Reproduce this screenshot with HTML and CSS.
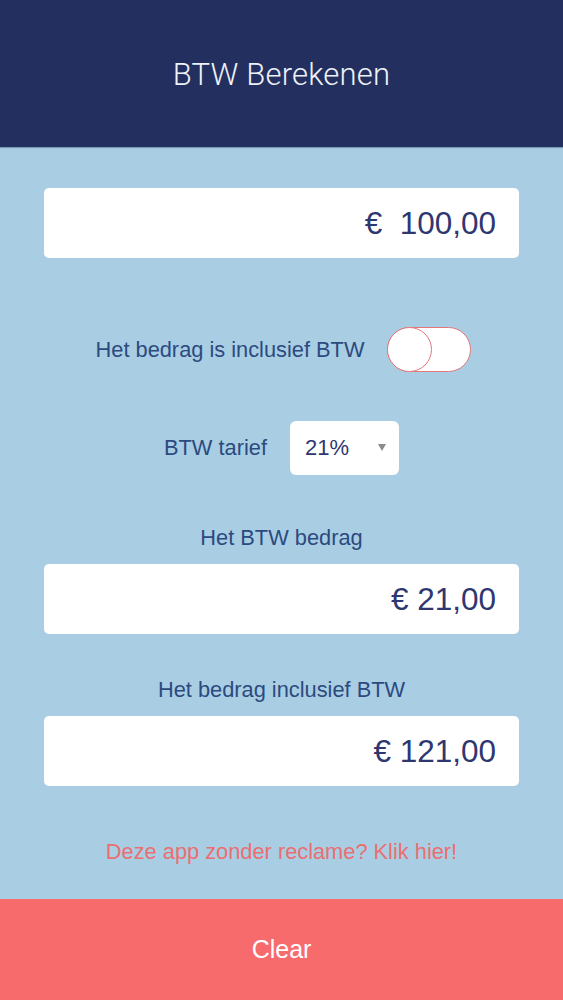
FILE: index.html
```html
<!DOCTYPE html>
<html lang="nl">
<head>
<meta charset="utf-8">
<title>BTW Berekenen</title>
<link rel="stylesheet" href="styles.css">
</head>
<body>
<div class="app">
  <header class="topbar">
    <h1 class="title">BTW Berekenen</h1>
  </header>
  <main class="content">
    <div class="field field-input">€&nbsp;&nbsp;100,00</div>
    <div class="row toggle-row">
      <span class="label">Het bedrag is inclusief BTW</span>
      <span class="switch"><span class="knob"></span></span>
    </div>
    <div class="row select-row">
      <span class="label">BTW tarief</span>
      <span class="select"><span class="select-value">21%</span><span class="caret"></span></span>
    </div>
    <div class="label caption caption-first">Het BTW bedrag</div>
    <div class="field">€ 21,00</div>
    <div class="label caption">Het bedrag inclusief BTW</div>
    <div class="field">€ 121,00</div>
    <a class="promo" href="#">Deze app zonder reclame? Klik hier!</a>
  </main>
  <button class="clear" type="button">Clear</button>
</div>
</body>
</html>
```
FILE: styles.css
```css
html, body {
  margin: 0;
  padding: 0;
}
body {
  font-family: "Liberation Sans", Arial, sans-serif;
  background: #a9cee4;
}
.app {
  height: 100vh;
  display: flex;
  flex-direction: column;
}
.topbar {
  height: 147px;
  flex: none;
  background: #232f5e;
  display: flex;
  align-items: center;
  justify-content: center;
  box-shadow: 0 1px 1px rgba(40, 60, 100, 0.35);
}
.title {
  margin: 0;
  font-family: Roboto, "Liberation Sans", sans-serif;
  font-weight: 300;
  font-size: 31px;
  color: #eef1f8;
  letter-spacing: 0.2px;
  padding-top: 2px;
}
.content {
  flex: 1;
  display: flex;
  flex-direction: column;
  padding: 41px 44px 0;
}
.field {
  height: 70px;
  background: #ffffff;
  border-radius: 5px;
  display: flex;
  align-items: center;
  justify-content: flex-end;
  padding-right: 23px;
  font-size: 31.5px;
  color: #2f3770;
  box-sizing: border-box;
}
.row {
  display: flex;
  align-items: center;
  justify-content: center;
}
.label {
  font-size: 21.8px;
  color: #2c4a7e;
  line-height: 26px;
}
.toggle-row {
  margin-top: 69px;
  gap: 23px;
  height: 45px;
  padding-left: 4px;
}
.switch {
  width: 84px;
  height: 45px;
  box-sizing: border-box;
  border: 1.5px solid #e2787b;
  border-radius: 23px;
  background: #ffffff;
  position: relative;
  display: block;
}
.knob {
  position: absolute;
  left: -1.5px;
  top: -1.5px;
  width: 45px;
  height: 45px;
  box-sizing: border-box;
  border: 1.5px solid #e2787b;
  border-radius: 50%;
  background: #ffffff;
}
.select-row {
  margin-top: 49px;
  gap: 23px;
}
.select {
  width: 109px;
  height: 54px;
  background: #ffffff;
  border-radius: 6px;
  display: flex;
  align-items: center;
  justify-content: space-between;
  padding: 0 13px 0 15px;
  box-sizing: border-box;
}
.select-value {
  font-size: 22px;
  color: #2f3770;
}
.caret {
  width: 0;
  height: 0;
  border-left: 4.5px solid transparent;
  border-right: 4.5px solid transparent;
  border-top: 7px solid #8b8b8b;
  margin-top: -2px;
}
.caption {
  text-align: center;
  margin-top: 43px;
  margin-bottom: 13px;
}
.caption-first {
  margin-top: 50px;
}
.promo {
  margin-top: 53px;
  text-align: center;
  font-size: 21.8px;
  line-height: 26px;
  color: #ea6f70;
  text-decoration: none;
}
.clear {
  flex: none;
  height: 101px;
  border: none;
  margin: 0;
  background: #f76b6d;
  color: #ffffff;
  font-family: "Liberation Sans", Arial, sans-serif;
  font-size: 25px;
  width: 100%;
}
```
